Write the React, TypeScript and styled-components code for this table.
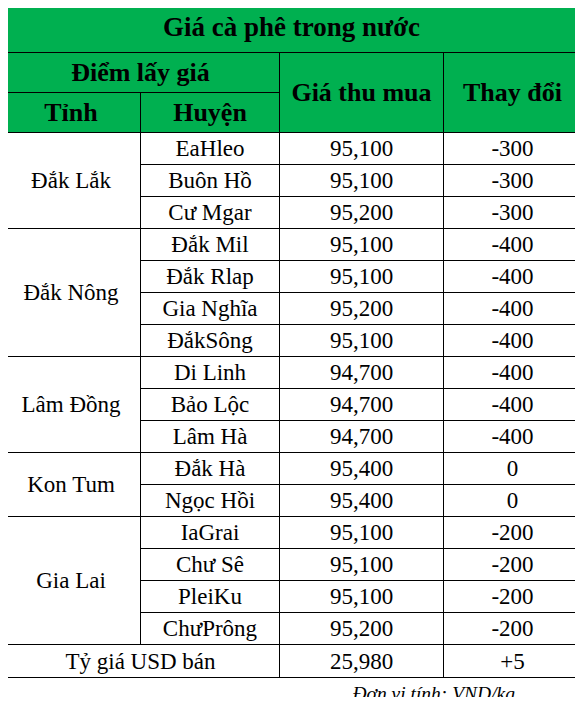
import React from 'react';
import styled, { ThemeProvider } from 'styled-components';

const theme = {
  font: "'Liberation Serif', 'Times New Roman', serif",
  green: '#00b050',
  line: '#000000',
};

// body keeps its default 8px margin, so the page pulls itself back to the corner
const Page = styled.div`
  width: 583px;
  margin: -8px;
  padding: 2px 0 0 1px;
  box-sizing: border-box;
  font-family: ${(p) => p.theme.font};
  color: #000;
`;

const Table = styled.table`
  border-collapse: collapse;
  table-layout: fixed;
  width: 580px;
  font-family: ${(p) => p.theme.font};
`;

const HeadCell = styled.th<{ $h: number; $size?: number }>`
  background: ${(p) => p.theme.green};
  border: 1px solid ${(p) => p.theme.line};
  height: ${(p) => p.$h}px;
  padding: 0;
  font-family: ${(p) => p.theme.font};
  font-size: ${(p) => p.$size ?? 26}px;
  font-weight: 700;
  text-align: center;
  vertical-align: middle;
  line-height: 1;
`;

const Cell = styled.td<{ $h?: number }>`
  border: 1px solid ${(p) => p.theme.line};
  height: ${(p) => p.$h ?? 31}px;
  padding: 0;
  font-family: ${(p) => p.theme.font};
  font-size: 23px;
  text-align: center;
  vertical-align: middle;
  line-height: 1;
  white-space: nowrap;
`;

const Footer = styled.div`
  width: 580px;
  text-align: right;
  padding: 5px 66px 0 0;
  box-sizing: border-box;
  font-family: ${(p) => p.theme.font};
  font-style: italic;
  font-size: 19.5px;
`;

type District = { name: string; price: string; change: string };
type Province = { name: string; districts: District[] };

const provinces: Province[] = [
  {
    name: 'Đắk Lắk',
    districts: [
      { name: 'EaHleo', price: '95,100', change: '-300' },
      { name: 'Buôn Hồ', price: '95,100', change: '-300' },
      { name: 'Cư Mgar', price: '95,200', change: '-300' },
    ],
  },
  {
    name: 'Đắk Nông',
    districts: [
      { name: 'Đắk Mil', price: '95,100', change: '-400' },
      { name: 'Đắk Rlap', price: '95,100', change: '-400' },
      { name: 'Gia Nghĩa', price: '95,200', change: '-400' },
      { name: 'ĐắkSông', price: '95,100', change: '-400' },
    ],
  },
  {
    name: 'Lâm Đồng',
    districts: [
      { name: 'Di Linh', price: '94,700', change: '-400' },
      { name: 'Bảo Lộc', price: '94,700', change: '-400' },
      { name: 'Lâm Hà', price: '94,700', change: '-400' },
    ],
  },
  {
    name: 'Kon Tum',
    districts: [
      { name: 'Đắk Hà', price: '95,400', change: '0' },
      { name: 'Ngọc Hồi', price: '95,400', change: '0' },
    ],
  },
  {
    name: 'Gia Lai',
    districts: [
      { name: 'IaGrai', price: '95,100', change: '-200' },
      { name: 'Chư Sê', price: '95,100', change: '-200' },
      { name: 'PleiKu', price: '95,100', change: '-200' },
      { name: 'ChưPrông', price: '95,200', change: '-200' },
    ],
  },
];

const App: React.FC = () => {
  return (
    <ThemeProvider theme={theme}>
      <Page>
        <Table>
          <colgroup>
            <col style={{ width: 139 }} />
            <col style={{ width: 139 }} />
            <col style={{ width: 164 }} />
            <col style={{ width: 138 }} />
          </colgroup>
          <thead>
            <tr>
              <HeadCell $h={49} $size={27} colSpan={4}>
                Giá cà phê trong nước
              </HeadCell>
            </tr>
            <tr>
              <HeadCell $h={39} colSpan={2}>
                Điểm lấy giá
              </HeadCell>
              <HeadCell $h={39} rowSpan={2}>
                Giá thu mua
              </HeadCell>
              <HeadCell $h={39} rowSpan={2}>
                Thay đổi
              </HeadCell>
            </tr>
            <tr>
              <HeadCell $h={39}>Tỉnh</HeadCell>
              <HeadCell $h={39}>Huyện</HeadCell>
            </tr>
          </thead>
          <tbody>
            {provinces.map((prov) =>
              prov.districts.map((d, i) => (
                <tr key={prov.name + d.name}>
                  {i === 0 && <Cell rowSpan={prov.districts.length}>{prov.name}</Cell>}
                  <Cell>{d.name}</Cell>
                  <Cell>{d.price}</Cell>
                  <Cell>{d.change}</Cell>
                </tr>
              ))
            )}
            <tr>
              <Cell $h={32} colSpan={2}>
                Tỷ giá USD bán
              </Cell>
              <Cell $h={32}>25,980</Cell>
              <Cell $h={32}>+5</Cell>
            </tr>
          </tbody>
        </Table>
        <Footer>Đơn vị tính: VND/kg</Footer>
      </Page>
    </ThemeProvider>
  );
};

export default App;
